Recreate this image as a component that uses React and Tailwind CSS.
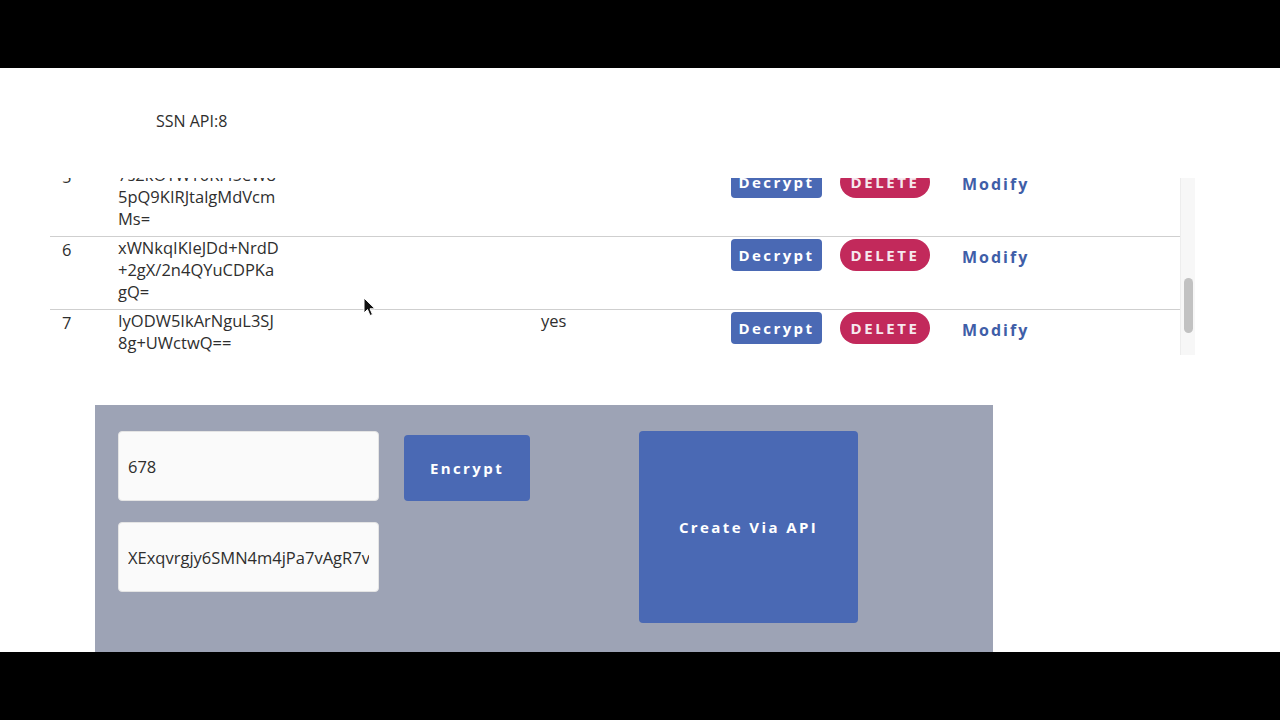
import { useLayoutEffect, useRef } from 'react';

const rows = [
  { id: 5, lines: ['7s2kOTWY0KFI5eW8', '5pQ9KIRJtalgMdVcm', 'Ms='], yes: '' },
  { id: 6, lines: ['xWNkqIKIeJDd+NrdD', '+2gX/2n4QYuCDPKa', 'gQ='], yes: '' },
  { id: 7, lines: ['IyODW5IkArNguL3SJ', '8g+UWctwQ=='], yes: 'yes' },
  { id: 8, lines: ['Rc9PzQ1nKb+Wm6Tx', 'Lf2JdY0sHa=='], yes: '' },
];

function Row({ r }) {
  return (
    <div className="h-[73px] border-t border-[#cfcfcf] flex items-start text-[16.5px] text-[#2e2e2e]">
      <div className="w-[68px] pl-[12px] pt-[2px] leading-[22px]">{r.id}</div>
      <div className="w-[423px] leading-[22px]">
        {r.lines.map((l, i) => <div key={i}>{l}</div>)}
      </div>
      <div className="w-[190px] leading-[22px]">{r.yes}</div>
      <button className="mt-[2px] w-[91px] h-[32px] rounded-[4px] bg-[#4a69b4] text-white font-bold text-[15px] tracking-[2.4px]">Decrypt</button>
      <button className="ml-[18px] mt-[2px] w-[90px] h-[32px] rounded-full bg-[#c2295b] text-[#f6e8ee] font-bold text-[15px] tracking-[2.6px]">DELETE</button>
      <button className="ml-[32px] mt-[4px] h-[32px] text-[#3f5ea8] font-bold text-[16px] tracking-[2px]">Modify</button>
    </div>
  );
}

export default function App() {
  const scroller = useRef(null);
  // list is scrolled partway, row 5 sits just under the top edge
  useLayoutEffect(() => { if (scroller.current) scroller.current.scrollTop = 15; }, []);

  return (
    <div className="w-[1280px] h-[720px] bg-black flex flex-col overflow-hidden font-['Open_Sans',sans-serif]">
      <div className="h-[68px] shrink-0 bg-black" />
      <div className="h-[584px] shrink-0 bg-white relative overflow-hidden">
        <p className="pt-[41px] pl-[156px] text-[16px] leading-6 text-[#2e2e2e]">SSN API:8</p>

        <div className="mt-[45px] ml-[50px] w-[1145px] h-[177px] flex">
          <div ref={scroller} className="w-[1130px] h-full overflow-hidden">
            {rows.map(r => <Row key={r.id} r={r} />)}
          </div>
          <div className="w-[15px] h-full bg-[#f7f7f7] border-l border-[#ededed]">
            <div className="mt-[100px] mx-auto w-[9px] h-[55px] rounded-full bg-[#c2c2c2]" />
          </div>
        </div>

        <div className="mt-[50px] ml-[95px] w-[898px] h-[260px] bg-[#9da3b5] pt-[26px] pl-[23px] flex items-start">
          <div className="flex flex-col gap-[21px]">
            <input readOnly defaultValue="678" className="w-[261px] h-[70px] rounded-[4px] bg-[#fafafa] border border-[#e4e4e4] px-[9px] text-[16.5px] text-[#2e2e2e] outline-none" />
            <input readOnly defaultValue="XExqvrgjy6SMN4m4jPa7vAgR7vT2kLq9=" className="w-[261px] h-[70px] rounded-[4px] bg-[#fafafa] border border-[#e4e4e4] px-[9px] text-[16.5px] text-[#2e2e2e] outline-none" />
          </div>
          <button className="ml-[25px] mt-[4px] w-[126px] h-[66px] rounded-[4px] bg-[#4a69b4] text-white font-bold text-[15px] tracking-[2.4px]">Encrypt</button>
          <button className="ml-[109px] w-[219px] h-[192px] rounded-[4px] bg-[#4a69b4] text-white font-bold text-[15px] tracking-[2.4px]">Create Via API</button>
        </div>

        <svg className="absolute left-[363px] top-[229px]" width="13" height="20" viewBox="0 0 13 20">
          <path d="M1 1 L1 16 L4.5 12.5 L7 18.5 L9.5 17.5 L7 11.8 L12 11.8 Z" fill="#111" stroke="#fff" strokeWidth="1" />
        </svg>
      </div>
      <div className="h-[68px] shrink-0 bg-black" />
    </div>
  );
}
